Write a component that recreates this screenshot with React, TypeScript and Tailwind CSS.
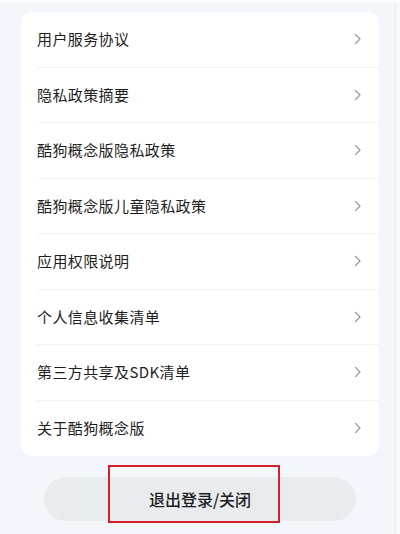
import React from "react";

const items = [
  "用户服务协议",
  "隐私政策摘要",
  "酷狗概念版隐私政策",
  "酷狗概念版儿童隐私政策",
  "应用权限说明",
  "个人信息收集清单",
  "第三方共享及SDK清单",
  "关于酷狗概念版",
];

function Chevron() {
  return (
    <svg width="8" height="12" viewBox="0 0 8 12" fill="none">
      <path d="M1.5 1.5 L6 6 L1.5 10.5" stroke="#9a9a9a" strokeWidth="1.3" strokeLinecap="round" strokeLinejoin="round" />
    </svg>
  );
}

export default function App() {
  return (
    <div
      className="w-[400px] h-[534px] bg-[#f3f7fb] overflow-hidden flex flex-col"
      style={{ fontFamily: '"Noto Sans CJK SC", "Noto Sans", sans-serif' }}
    >
      <div className="h-[3px] bg-[#fafcfe]" />
      <div className="flex flex-1 min-h-0">
        <div className="flex-1 flex flex-col">
          <div className="ml-[21px] mr-[2px] mt-[9px] bg-white rounded-[10px] flex flex-col">
            {items.map((t, i) => (
              <div key={t} className="pl-[16px] h-[55.5px] flex flex-col">
                <div className="flex-1 flex items-center justify-between pr-[17px]">
                  <span className="text-[15px] text-[#1e1e1e] tracking-[0.4px]">{t}</span>
                  <Chevron />
                </div>
                {i < items.length - 1 && <div className="h-px bg-[#f3f3f3]" />}
              </div>
            ))}
          </div>
          <div className="mt-[21px] ml-[44px] mr-[25px] h-[44px] rounded-full bg-[#e9ecef] flex items-center justify-center relative">
            <span className="text-[16px] font-medium text-[#1e1e1e]">退出登录/关闭</span>
            <div className="absolute left-[64px] top-[-12px] w-[172px] h-[58px] border-2 border-[#d4202b]" />
          </div>
        </div>
        <div className="w-[19px] flex">
          <div className="flex-1" />
          <div className="w-[5px] border-l border-[#e6ebf0] bg-[#f6f9fc]" />
        </div>
      </div>
    </div>
  );
}
